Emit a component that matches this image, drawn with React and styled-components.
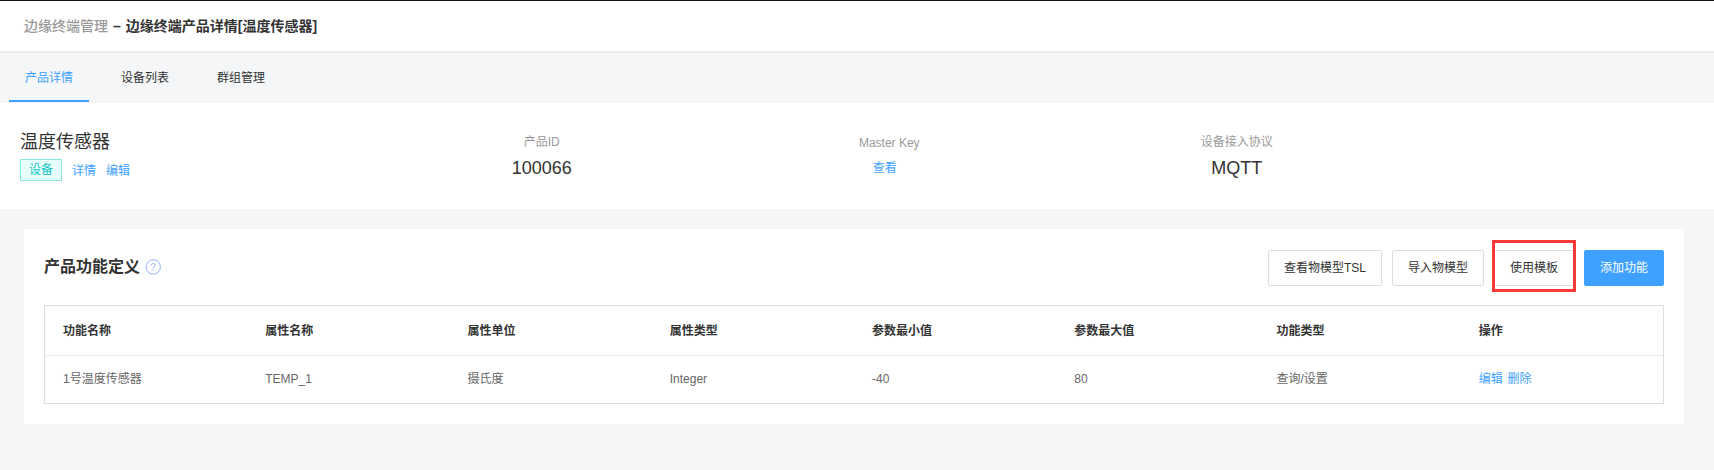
import React from "react";
import styled, { createGlobalStyle } from "styled-components";

const GlobalStyle = createGlobalStyle`
  * { box-sizing: border-box; }
  body {
    margin: 0;
    background: #f4f6f8;
    color: #333;
    font: 12px/18px "Liberation Sans", Arial, "Noto Sans CJK SC", sans-serif;
  }
`;

const Page = styled.div`
  min-height: 470px;
  background: #f4f6f8;
`;

const Header = styled.header`
  display: flex;
  align-items: center;
  gap: 5px;
  height: 53px;
  padding: 0 24px 1px;
  border-top: 1px solid #111;
  border-bottom: 2px solid #ededee;
  background: #fff;
  font-size: 14px;
  line-height: 20px;
`;

const Crumb = styled.span`
  color: ${(p) => (p.$muted ? "#999" : "#333")};
  font-weight: ${(p) => (p.$muted ? 500 : "bold")};
`;

const Tabs = styled.nav`
  display: flex;
  gap: 16px;
  height: 50px;
  padding: 0 9px 1px;
`;

const Tab = styled.a`
  width: 80px;
  padding-top: 16px;
  text-align: center;
  color: ${(p) => (p.$active ? "#3ea1ff" : "#333")};
  border-bottom: 2px solid ${(p) => (p.$active ? "#3ea1ff" : "transparent")};
`;

const Summary = styled.section`
  display: grid;
  grid-template-columns: repeat(4, 347.5px);
  height: 106px;
  padding: 26px 20px 0;
  background: #fff;
`;

const ProductName = styled.h1`
  margin: 0 0 4px;
  font-size: 18px;
  line-height: 26px;
  font-weight: normal;
`;

const TagRow = styled.div`
  display: flex;
  align-items: center;
  gap: 10px;
`;

const Tag = styled.span`
  height: 22px;
  padding: 0 8px;
  border: 1px solid #87e8de;
  background: #e6fffb;
  color: #13c2c2;
  line-height: 20px;
`;

const Link = styled.a`
  color: #3ea1ff;
`;

const RowLink = styled(Link)`
  margin-right: ${(p) => (p.$spaced ? "1.5px" : 0)};
`;

const TagLink = styled(Link)`
  padding-top: 1px;
`;

const Fact = styled.div`
  display: flex;
  flex-direction: column;
  align-items: center;
  padding: ${(p) => (p.$latin ? 5 : 4)}px 0 0 1px;
`;

const FactLabel = styled.span`
  color: #999;
`;

const FactValue = styled.span`
  padding-top: 5px;
  font-size: 18px;
  line-height: 24px;
`;

const FactLink = styled(Link)`
  padding: 6px 9px 0 0;
  line-height: 20px;
`;

const Card = styled.section`
  height: 195px;
  margin: 20px 30px 0 24px;
  padding: 21px 20px 20px;
  background: #fff;
`;

const CardHeader = styled.div`
  display: flex;
  justify-content: space-between;
  height: 55px;
`;

const CardTitle = styled.h2`
  display: flex;
  align-items: center;
  gap: 5px;
  height: 34px;
  margin: 0;
  font-size: 16px;
  line-height: 24px;
`;

const HelpMark = styled.svg`
  margin-bottom: 1px;
`;

const HelpIcon = () => (
  <HelpMark width="16" height="16" viewBox="0 0 16 16" fill="none" stroke="#8aa9ff">
    <circle cx="8.2" cy="8" r="7.2" strokeWidth="0.9" />
    <path d="M6.2 6.4C6.2 5.2 7.1 4.5 8.2 4.5s2 .7 2 1.7c0 1.5-2 1.5-2 3.2" />
    <path d="M8.2 10.7v1.1" />
  </HelpMark>
);

const Actions = styled.div`
  display: flex;
  align-items: flex-start;
  gap: 10px;
`;

const Button = styled.button`
  position: relative;
  height: 36px;
  padding: 0 15px;
  border: 1px solid ${(p) => (p.$primary ? "#3ea1ff" : "#dcdddd")};
  border-radius: 2px;
  background: ${(p) => (p.$primary ? "#3ea1ff" : "#fff")};
  color: ${(p) => (p.$primary ? "#fff" : "#333")};
  font: inherit;
  white-space: nowrap;
`;

const Highlight = styled.span`
  position: absolute;
  inset: -11px -3px -7px;
  border: 3px solid #ff3838;
`;

const Table = styled.div`
  border: 1px solid #dcdddd;
`;

const Row = styled.div`
  display: grid;
  grid-template-columns: repeat(8, 1fr);
  align-items: center;
  height: ${(p) => (p.$head ? 50 : 47)}px;
  padding-bottom: ${(p) => (p.$head ? 0 : 1)}px;
  border-bottom: ${(p) => (p.$head ? "1px solid #e8e8e8" : "0")};
  color: ${(p) => (p.$head ? "#333" : "#666")};
  font-weight: ${(p) => (p.$head ? "bold" : "normal")};
`;

const Cell = styled.div`
  padding-left: 18px;
  white-space: nowrap;
`;

const tabs = ["产品详情", "设备列表", "群组管理"];
const columns = ["功能名称", "属性名称", "属性单位", "属性类型", "参数最小值", "参数最大值", "功能类型", "操作"];
const values = ["1号温度传感器", "TEMP_1", "摄氏度", "Integer", "-40", "80", "查询/设置"];

export default function App() {
  return (
    <Page>
      <GlobalStyle />
      <Header>
        <Crumb $muted>边缘终端管理</Crumb>
        <Crumb>–</Crumb>
        <Crumb>边缘终端产品详情[温度传感器]</Crumb>
      </Header>
      <Tabs>
        {tabs.map((t, i) => (
          <Tab key={t} $active={i === 0}>{t}</Tab>
        ))}
      </Tabs>
      <Summary>
        <div>
          <ProductName>温度传感器</ProductName>
          <TagRow>
            <Tag>设备</Tag>
            <TagLink>详情</TagLink>
            <TagLink>编辑</TagLink>
          </TagRow>
        </div>
        <Fact>
          <FactLabel>产品ID</FactLabel>
          <FactValue>100066</FactValue>
        </Fact>
        <Fact $latin>
          <FactLabel>Master Key</FactLabel>
          <FactLink>查看</FactLink>
        </Fact>
        <Fact>
          <FactLabel>设备接入协议</FactLabel>
          <FactValue>MQTT</FactValue>
        </Fact>
      </Summary>
      <Card>
        <CardHeader>
          <CardTitle>
            产品功能定义
            <HelpIcon />
          </CardTitle>
          <Actions>
            <Button>查看物模型TSL</Button>
            <Button>导入物模型</Button>
            <Button>
              使用模板
              <Highlight />
            </Button>
            <Button $primary>添加功能</Button>
          </Actions>
        </CardHeader>
        <Table>
          <Row $head>
            {columns.map((c) => (
              <Cell key={c}>{c}</Cell>
            ))}
          </Row>
          <Row>
            {values.map((v) => (
              <Cell key={v}>{v}</Cell>
            ))}
            <Cell>
              <RowLink $spaced>编辑</RowLink> <RowLink>删除</RowLink>
            </Cell>
          </Row>
        </Table>
      </Card>
    </Page>
  );
}
